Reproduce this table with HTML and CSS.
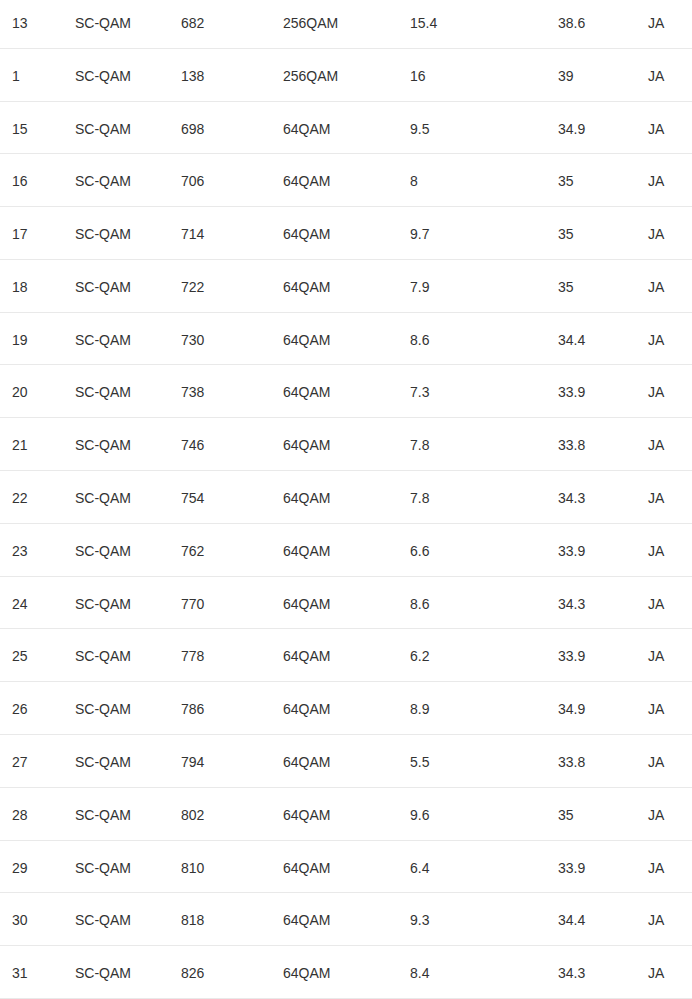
FILE: index.html
```html
<!DOCTYPE html>
<html>
<head>
<meta charset="utf-8">
<link rel="stylesheet" href="styles.css">
</head>
<body>
<table class="channels">
<colgroup>
<col class="c1"><col class="c2"><col class="c3"><col class="c4"><col class="c5"><col class="c6"><col class="c7">
</colgroup>
<tbody>
<tr><td>13</td><td>SC-QAM</td><td>682</td><td>256QAM</td><td>15.4</td><td>38.6</td><td>JA</td></tr>
<tr><td>1</td><td>SC-QAM</td><td>138</td><td>256QAM</td><td>16</td><td>39</td><td>JA</td></tr>
<tr><td>15</td><td>SC-QAM</td><td>698</td><td>64QAM</td><td>9.5</td><td>34.9</td><td>JA</td></tr>
<tr><td>16</td><td>SC-QAM</td><td>706</td><td>64QAM</td><td>8</td><td>35</td><td>JA</td></tr>
<tr><td>17</td><td>SC-QAM</td><td>714</td><td>64QAM</td><td>9.7</td><td>35</td><td>JA</td></tr>
<tr><td>18</td><td>SC-QAM</td><td>722</td><td>64QAM</td><td>7.9</td><td>35</td><td>JA</td></tr>
<tr><td>19</td><td>SC-QAM</td><td>730</td><td>64QAM</td><td>8.6</td><td>34.4</td><td>JA</td></tr>
<tr><td>20</td><td>SC-QAM</td><td>738</td><td>64QAM</td><td>7.3</td><td>33.9</td><td>JA</td></tr>
<tr><td>21</td><td>SC-QAM</td><td>746</td><td>64QAM</td><td>7.8</td><td>33.8</td><td>JA</td></tr>
<tr><td>22</td><td>SC-QAM</td><td>754</td><td>64QAM</td><td>7.8</td><td>34.3</td><td>JA</td></tr>
<tr><td>23</td><td>SC-QAM</td><td>762</td><td>64QAM</td><td>6.6</td><td>33.9</td><td>JA</td></tr>
<tr><td>24</td><td>SC-QAM</td><td>770</td><td>64QAM</td><td>8.6</td><td>34.3</td><td>JA</td></tr>
<tr><td>25</td><td>SC-QAM</td><td>778</td><td>64QAM</td><td>6.2</td><td>33.9</td><td>JA</td></tr>
<tr><td>26</td><td>SC-QAM</td><td>786</td><td>64QAM</td><td>8.9</td><td>34.9</td><td>JA</td></tr>
<tr><td>27</td><td>SC-QAM</td><td>794</td><td>64QAM</td><td>5.5</td><td>33.8</td><td>JA</td></tr>
<tr><td>28</td><td>SC-QAM</td><td>802</td><td>64QAM</td><td>9.6</td><td>35</td><td>JA</td></tr>
<tr><td>29</td><td>SC-QAM</td><td>810</td><td>64QAM</td><td>6.4</td><td>33.9</td><td>JA</td></tr>
<tr><td>30</td><td>SC-QAM</td><td>818</td><td>64QAM</td><td>9.3</td><td>34.4</td><td>JA</td></tr>
<tr><td>31</td><td>SC-QAM</td><td>826</td><td>64QAM</td><td>8.4</td><td>34.3</td><td>JA</td></tr>
</tbody>
</table>
</body>
</html>
```
FILE: styles.css
```css
html, body {
  margin: 0;
  padding: 0;
  background: #fff;
}
body {
  font-family: "Liberation Sans", Arial, sans-serif;
  font-size: 14px;
  color: #333;
  overflow: hidden;
}
.channels {
  width: 692px;
  border-collapse: collapse;
  table-layout: fixed;
  margin-top: -4px;
}
.channels td {
  padding: 18px 0 14px 12px;
  line-height: 19.78px;
  border-bottom: 1px solid #e9e9e9;
  white-space: nowrap;
  vertical-align: middle;
}
.c1 { width: 63px; }
.c2 { width: 106px; }
.c3 { width: 102px; }
.c4 { width: 127px; }
.c5 { width: 148px; }
.c6 { width: 90px; }
.c7 { width: 56px; }
```
